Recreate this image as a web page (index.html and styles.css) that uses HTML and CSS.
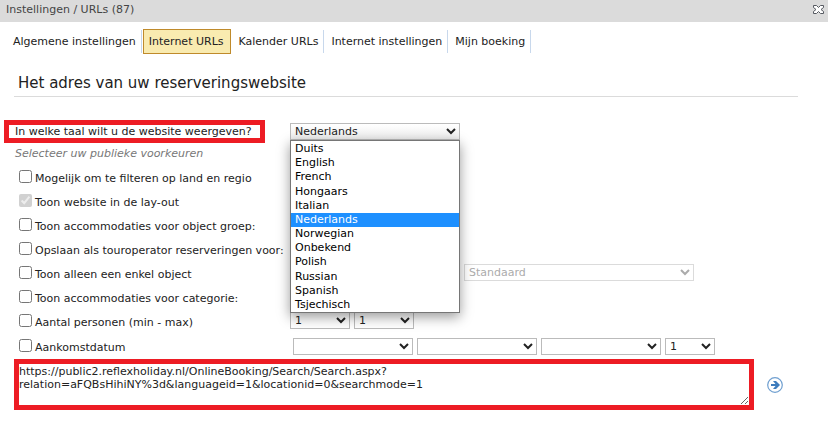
FILE: index.html
```html
<!DOCTYPE html>
<html lang="nl">
<head>
    <meta charset="UTF-8">
    <meta name="viewport" content="width=device-width, initial-scale=1.0">
    <title>Instellingen / URLs (87)</title>
    <link rel="stylesheet" href="styles.css">
</head>
<body>
    <header class="titlebar">
        <span>Instellingen / URLs (87)</span>
        <button class="close" type="button" aria-label="Sluiten">
            <svg width="11" height="9" viewBox="0 0 11 9">
                <path d="M0.5 0.5h3l2 2 2-2h3v2l-2.500 2 2.500 2v2h-3l-2-2-2 2h-3v-2l2.500-2-2.500-2z" fill="#fff" stroke="#555960"/>
            </svg>
        </button>
    </header>
    <nav class="tabs">
        <a href="#">Algemene instellingen</a>
        <a href="#" class="active">Internet URLs</a>
        <a href="#">Kalender URLs</a>
        <a href="#">Internet instellingen</a>
        <a href="#">Mijn boeking</a>
    </nav>
    <main class="content">
        <h1>Het adres van uw reserveringswebsite</h1>
        <form class="settings">
            <div class="row language">
                <label class="question" for="taal">In welke taal wilt u de website weergeven?</label>
                <div class="dropdown">
                    <select id="taal">
                        <option>Nederlands</option>
                    </select>
                    <ul class="list" role="listbox" aria-label="Taal">
                        <li role="option">Duits</li>
                        <li role="option">English</li>
                        <li role="option">French</li>
                        <li role="option">Hongaars</li>
                        <li role="option">Italian</li>
                        <li role="option" class="selected" aria-selected="true">Nederlands</li>
                        <li role="option">Norwegian</li>
                        <li role="option">Onbekend</li>
                        <li role="option">Polish</li>
                        <li role="option">Russian</li>
                        <li role="option">Spanish</li>
                        <li role="option">Tsjechisch</li>
                    </ul>
                </div>
            </div>
            <p class="hint">Selecteer uw publieke voorkeuren</p>
            <div class="row">
                <label><input type="checkbox">Mogelijk om te filteren op land en regio</label>
            </div>
            <div class="row">
                <label><input type="checkbox" checked disabled>Toon website in de lay-out</label>
            </div>
            <div class="row">
                <label><input type="checkbox">Toon accommodaties voor object groep:</label>
            </div>
            <div class="row">
                <label><input type="checkbox">Opslaan als touroperator reserveringen voor:</label>
            </div>
            <div class="row">
                <label><input type="checkbox">Toon alleen een enkel object</label>
                <div class="fields object">
                    <select class="wide" aria-label="Object" disabled>
                        <option>Standaard</option>
                    </select>
                </div>
            </div>
            <div class="row">
                <label><input type="checkbox">Toon accommodaties voor categorie:</label>
            </div>
            <div class="row">
                <label><input type="checkbox">Aantal personen (min - max)</label>
                <div class="fields">
                    <select class="number" aria-label="Min"><option>1</option></select>
                    <select class="number" aria-label="Max"><option>1</option></select>
                </div>
            </div>
            <div class="row arrival">
                <label><input type="checkbox">Aankomstdatum</label>
                <div class="fields dates">
                    <select class="date" aria-label="Dag"><option></option></select>
                    <select class="date" aria-label="Maand"><option></option></select>
                    <select class="date" aria-label="Jaar"><option></option></select>
                    <select class="nights" aria-label="Aantal"><option>1</option></select>
                </div>
            </div>
            <div class="url">
                <textarea aria-label="URL">https://public2.reflexholiday.nl/OnlineBooking/Search/Search.aspx?relation=aFQBsHihiNY%3d&amp;languageid=1&amp;locationid=0&amp;searchmode=1</textarea>
                <button class="go" type="button" aria-label="Openen">
                    <svg width="16" height="16" viewBox="0 0 16 16">
                        <circle cx="8" cy="8" r="7.300" fill="#fff" stroke="#6f9fd0" stroke-width="1.200"/>
                        <path d="M4 7h4.500L6 4h3l4 4-4 4H6l2.500-3H4z" fill="#3f7dbd"/>
                    </svg>
                </button>
            </div>
        </form>
    </main>
</body>
</html>
```

FILE: styles.css
```css
body {
    font-family: Verdana, "DejaVu Sans", sans-serif;
    font-size: 11px;
    margin: 0;
    color: #222;
    background-color: #fff;
}
button {
    padding: 0;
    border: none;
    background: none;
    cursor: pointer;
}
button svg {
    display: block;
}
.titlebar {
    display: flex;
    justify-content: space-between;
    align-items: center;
    height: 22px;
    box-sizing: border-box;
    padding: 0 4px 4px 6px;
    background-color: #dbdbdb;
    color: #444;
}
.tabs {
    display: flex;
    height: 25px;
    margin-top: 7px;
    padding-left: 8px;
}
.tabs a {
    display: flex;
    align-items: center;
    height: 23px;
    margin: 1px 2px 0 0;
    padding: 0 5px;
    border-right: 1px solid #c8d8ec;
    color: #222;
    text-decoration: none;
}
.tabs .active {
    margin: 0 3px 0 -1px;
    padding-right: 6px;
    border: 1px solid #bf8a2b;
    background-color: #f9ebb0;
}
.content {
    padding: 0 30px 0 14px;
}
h1 {
    margin: 0 0 23px;
    padding: 20px 0 4px 4px;
    border-bottom: 1px solid #dbdbdb;
    font-size: 15px;
    line-height: 18px;
    font-weight: normal;
}
.row {
    display: grid;
    grid-template-columns: 276px 1fr;
    align-items: center;
    height: 24px;
}
.row label {
    display: flex;
    align-items: center;
    white-space: nowrap;
}
.row input {
    width: 13px;
    height: 13px;
    margin: 0 3px 4px 5px;
}
.language {
    height: 23px;
}
.row .question {
    justify-self: start;
    box-sizing: border-box;
    height: 23px;
    margin-left: -10px;
    padding: 0 8px 0 6px;
    border: 5px solid #ed1c24;
}
.hint {
    margin: 0;
    padding: 4px 0 5px 1px;
    line-height: 14px;
    font-style: italic;
    color: #777;
}
select {
    height: 17px;
    padding: 0;
    border: 1px solid #bbb;
    border-radius: 0;
    background-color: #fff;
    font: inherit;
    color: #222;
}
select:disabled {
    border-color: #ccc;
    color: #888;
}
.dropdown {
    position: relative;
    width: 170px;
}
.dropdown select {
    display: block;
    width: 100%;
    background-image: linear-gradient(#fff, #eee);
}
.list {
    position: absolute;
    top: 100%;
    left: 0;
    z-index: 1;
    display: grid;
    grid-auto-rows: 1fr;
    box-sizing: border-box;
    width: 100%;
    height: 173px;
    margin: 0;
    padding: 1px 0 0;
    border: 1px solid #767676;
    background-color: #fff;
    box-shadow: 0 4px 12px rgba(0, 0, 0, 0.4);
    color: #000;
    line-height: 14px;
    list-style: none;
}
.list li {
    padding-left: 4px;
}
.list .selected {
    background-color: #1e90ff;
    color: #fff;
}
.fields {
    display: flex;
    gap: 4px;
    padding-bottom: 3px;
}
.object {
    padding-left: 174px;
}
.dates {
    padding-left: 3px;
}
.wide {
    width: 230px;
}
.number {
    width: 60px;
}
.date {
    width: 120px;
}
.nights {
    width: 50px;
}
.arrival {
    height: 27px;
}
.url {
    display: flex;
    align-items: center;
    gap: 13px;
    margin-top: -2px;
}
.url textarea {
    flex: 1;
    box-sizing: border-box;
    height: 51px;
    margin: 0;
    padding: 1px 0 0;
    border: 5px solid #ed1c24;
    font: inherit;
    line-height: 13px;
    color: #222;
}
.go {
    margin-right: 15px;
}
```
